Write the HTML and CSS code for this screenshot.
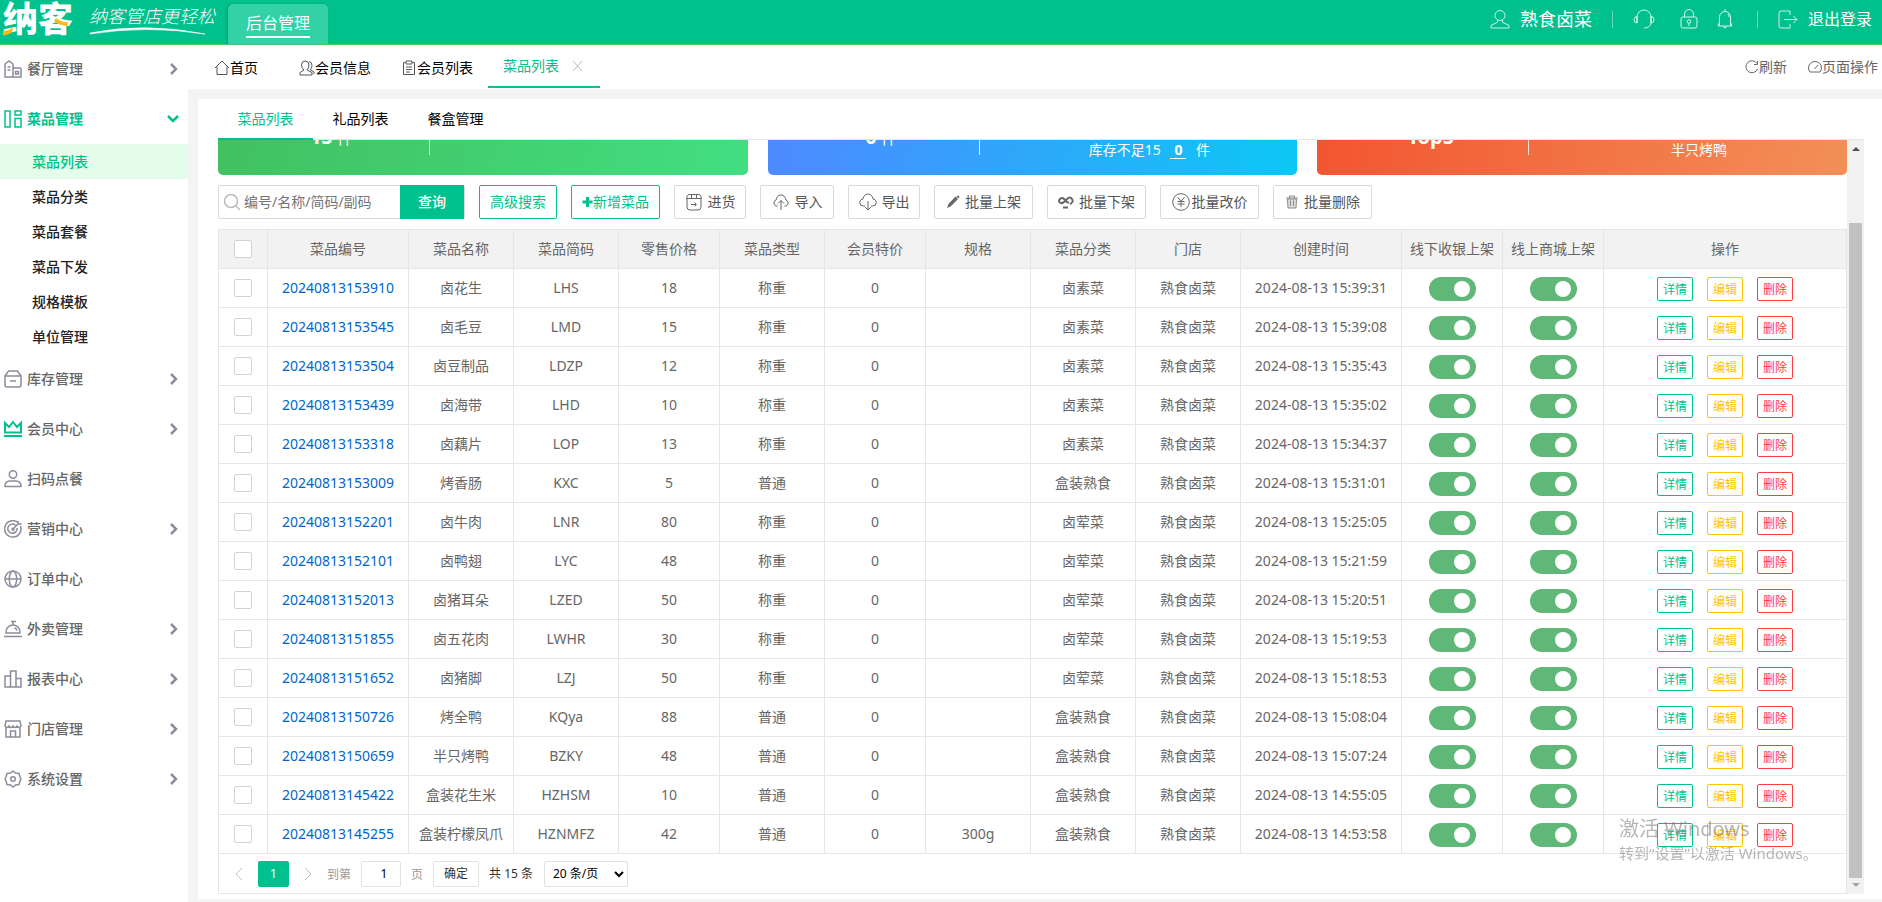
FILE: index.html
```
<!DOCTYPE html>
<html lang="zh-CN">
<head>
  <meta charset="UTF-8">
  <title>菜品列表</title>
  <link rel="stylesheet" href="styles.css">
</head>
<body>
  <header class="header">
    <div class="logo">纳客
      <svg class="logo-accent" viewBox="0 0 70 34"><path d="M1 28q6 0 10-4l-1 5q-4 4-9 3zM54 15q6 5 12 4l-1 4q-9-1-13-5z" fill="#ffb80c"/></svg>
    </div>
    <div class="slogan">
      <span>纳客管店更轻松</span>
      <svg width="118" height="8" viewBox="0 0 118 8"><path d="M1 6Q56-5 116 7Q58-2 1 7z" fill="#fff" stroke="#fff" stroke-width=".6"/></svg>
    </div>
    <a class="header-tab" href="#"><span>后台管理</span></a>
    <div class="header-right">
      <a class="user" href="#">
        <svg width="20" height="20" viewBox="0 0 20 20"><circle cx="10" cy="6.500" r="5"/><path d="M7.500 11v2.200L1 16.500V19h18v-2.500L12.500 13.200V11"/></svg>
        熟食卤菜
      </a>
      <i class="line"></i>
      <button class="icon-btn headset" aria-label="客服"><svg width="22" height="20" viewBox="0 0 22 20"><path d="M4 14V8a7 7 0 0 1 14 0v6M4 7.500Q1 7.500 1 10.700t3 3.300zM18 7.500q3 0 3 3.200t-3 3.300zM18 14q-1 5-7 5"/></svg></button>
      <button class="icon-btn lock" aria-label="锁屏"><svg width="18" height="20" viewBox="0 0 18 20"><path d="M4.500 8V5a4.500 4.500 0 0 1 9 0v3"/><rect x="1" y="8" width="16" height="11" rx="2"/><circle cx="9" cy="12.500" r="1.800"/><path d="M9 14.500V17"/></svg></button>
      <button class="icon-btn bell" aria-label="消息"><svg width="16" height="20" viewBox="0 0 16 20"><path d="M8 0v2M2.500 16V8a5.500 5.500 0 0 1 11 0v8M2.500 13L1 17h14l-1.500-4M6 17.500q2 3 4 0M11 5q1 1 1 3"/></svg></button>
      <i class="line"></i>
      <a class="logout" href="#">
        <svg width="20" height="19" viewBox="0 0 20 19"><path d="M12 5V1H3Q1 1 1 3v13q0 2 2 2h9v-4M6 9.500h13M15.500 6l3.500 3.500-3.500 3.500"/></svg>
        退出登录
      </a>
    </div>
  </header>

  <div class="layout">
    <nav class="sidebar">
      <a class="menu" href="#"><svg class="mi" viewBox="0 0 18 18"><path d="M1 17V4l4-3 4 3v13zM9 8h7q1 0 1 1v8H9M3.500 7h3M3.500 10h3M11.500 11.500h3v2.500h-3zM1 17h16"/></svg>餐厅管理<svg class="arrow" viewBox="0 0 10 12"><path d="M2 1l5 5-5 5"/></svg></a>
      <a class="menu active" href="#"><svg class="mi" viewBox="0 0 18 18"><path d="M1 1h5v16H1zM11 1h6v4h-6zM11 8.500h6V17h-6z"/></svg>菜品管理<svg class="arrow down" viewBox="0 0 12 10"><path d="M1 2l5 5 5-5"/></svg></a>
      <div class="submenu">
        <a class="on" href="#">菜品列表</a>
        <a href="#">菜品分类</a>
        <a href="#">菜品套餐</a>
        <a href="#">菜品下发</a>
        <a href="#">规格模板</a>
        <a href="#">单位管理</a>
      </div>
      <a class="menu" href="#"><svg class="mi" viewBox="0 0 18 18"><path d="M1 6l3.500-5h9L17 6M1 6h16v9q0 2-2 2H3q-2 0-2-2zM6 11h6"/></svg>库存管理<svg class="arrow" viewBox="0 0 10 12"><path d="M2 1l5 5-5 5"/></svg></a>
      <a class="menu vip" href="#"><svg class="mi" viewBox="0 0 18 18"><path d="M1 3l4 4 4-5 4 5 4-4v9.500H1zM0 16h18"/></svg>会员中心<svg class="arrow" viewBox="0 0 10 12"><path d="M2 1l5 5-5 5"/></svg></a>
      <a class="menu" href="#"><svg class="mi" viewBox="0 0 18 18"><circle cx="9" cy="4.500" r="3.700"/><path d="M1 16.500q0-5.500 5-5.500h6q5 0 5 5.500z"/></svg>扫码点餐</a>
      <a class="menu" href="#"><svg class="mi" viewBox="0 0 18 18"><path d="M14 2.500A8.200 8.200 0 1 0 16.500 6M11.500 5.200A4.600 4.600 0 1 0 13 8M9 9l6-6M14 1v3h3.500"/><circle cx="9" cy="9.200" r="1"/></svg>营销中心<svg class="arrow" viewBox="0 0 10 12"><path d="M2 1l5 5-5 5"/></svg></a>
      <a class="menu" href="#"><svg class="mi" viewBox="0 0 18 18"><circle cx="9" cy="9" r="8"/><ellipse cx="9" cy="9" rx="3.700" ry="8"/><path d="M1 9h16"/></svg>订单中心</a>
      <a class="menu" href="#"><svg class="mi" viewBox="0 0 18 18"><path d="M7 1.500h5M9 2v3M2 13v-1a7 7 0 0 1 14 0v1zM0 16.500h18M10.500 8q2 .5 2.500 2.500"/></svg>外卖管理<svg class="arrow" viewBox="0 0 10 12"><path d="M2 1l5 5-5 5"/></svg></a>
      <a class="menu" href="#"><svg class="mi" viewBox="0 0 18 18"><path d="M1 17V6h5.500v11zM6.500 17V1H12v16zM12 8.500h5V17H1"/></svg>报表中心<svg class="arrow" viewBox="0 0 10 12"><path d="M2 1l5 5-5 5"/></svg></a>
      <a class="menu" href="#"><svg class="mi" viewBox="0 0 18 18"><path d="M2 8v9h14V8M2 1h14l1 5q-2 3-4 0-2 3-4 0-2 3-4 0-2 3-4 0zM6.500 17v-6h5v6"/></svg>门店管理<svg class="arrow" viewBox="0 0 10 12"><path d="M2 1l5 5-5 5"/></svg></a>
      <a class="menu" href="#"><svg class="mi" viewBox="0 0 18 18"><path d="M9 1l2.500 2 3.500.5L16 7l1 2-1 2-1 3.500-3.500.5L9 17l-2.500-2-3.500-.5L2 11 1 9l1-2 1-3.500L6.500 3z"/><circle cx="9" cy="9" r="2.300"/></svg>系统设置<svg class="arrow" viewBox="0 0 10 12"><path d="M2 1l5 5-5 5"/></svg></a>
    </nav>

    <main class="main">
      <div class="page-tabs">
        <a class="page-tab home" href="#"><svg width="16" height="16" viewBox="0 0 16 16"><path d="M1 8l7-7 7 7M3 6.500V14.500h10V6.500"/></svg>首页</a>
        <a class="page-tab" href="#"><svg width="16" height="16" viewBox="0 0 16 16"><path d="M6 1q4 0 4 4 0 3-2 5l5 2.500v2.500H1v-2.500L5 10Q2.500 8 2.500 5 2.500 1 6 1M10 1.500q3 .5 3 4t-2 4l4 2.500v2"/></svg>会员信息</a>
        <a class="page-tab" href="#"><svg width="16" height="16" viewBox="0 0 16 16"><path d="M4.500 2.500h-2v12h11v-12h-2M5 1h6v3H5zM5 7h6M5 9.500h6M5 12h4"/></svg>会员列表</a>
        <a class="page-tab current" href="#">菜品列表<svg class="close" width="12" height="12" viewBox="0 0 12 12"><path d="M2 1l9 10M11 1L2 11"/></svg></a>
        <div class="page-tools">
          <a href="#"><svg width="14" height="14" viewBox="0 0 14 14"><path d="M12.500 9A6 6 0 1 1 12 3.500M12.500 1v3.500H9"/></svg>刷新</a>
          <a href="#"><svg width="14" height="14" viewBox="0 0 14 14"><path d="M2 12Q.5 10 .5 8a6.500 6.500 0 0 1 13 0q0 2-1.500 4zM6.500 9L10 5"/></svg>页面操作</a>
        </div>
      </div>

      <section class="panel">
        <div class="sub-tabs">
          <a class="active" href="#">菜品列表</a>
          <a href="#">礼品列表</a>
          <a href="#">餐盒管理</a>
        </div>

        <div class="scroller">
          <div class="content">
            <div class="cards">
              <div class="card green">
                <div class="card-left"><b>15</b> 件</div>
                <div class="card-right"></div>
              </div>
              <div class="card blue">
                <div class="card-left"><b>0</b> 件</div>
                <div class="card-right">库存不足15 <b class="num">0</b> 件</div>
              </div>
              <div class="card orange">
                <div class="card-left"><b>Top5</b></div>
                <div class="card-right">半只烤鸭</div>
              </div>
            </div>

            <div class="toolbar">
              <div class="search">
                <svg width="18" height="18" viewBox="0 0 18 18"><circle cx="8" cy="8" r="6.500"/><path d="M13 13l4 4"/></svg>
                <input type="text" placeholder="编号/名称/简码/副码" aria-label="编号/名称/简码/副码">
                <button>查询</button>
              </div>
              <button class="btn primary">高级搜索</button>
              <button class="btn primary add"><svg width="11" height="12" viewBox="0 0 11 12"><path d="M5.500 1v10M.5 6h10"/></svg>新增菜品</button>
              <button class="btn small"><svg width="18" height="18" viewBox="0 0 18 18"><path d="M4 1.500h10q2 0 2.500 4h-15q.5-4 2.500-4zM2 5.500V14q0 3 3 3h8q3 0 3-3V5.500M6.500 1.500v4M11.500 1.500v4M6 11.500h5M9.500 9.500l2 2-2 2"/></svg>进货</button>
              <button class="btn small import"><svg width="18" height="18" viewBox="0 0 18 18"><path d="M5.500 13H4A3.200 3.200 0 0 1 4 7Q5 2 9 2t5 5a3.200 3.200 0 0 1 0 6H12.500M9 17V7.500M6 10.500l3-3 3 3"/></svg>导入</button>
              <button class="btn small"><svg width="18" height="18" viewBox="0 0 18 18"><path d="M6 13H4.500A3.500 3.500 0 0 1 4 6Q5 1 9 1t5 5a3.500 3.500 0 0 1-.5 7H12M9 8v9M6 14l3 3 3-3"/></svg>导出</button>
              <button class="btn"><svg width="14" height="14" viewBox="0 0 14 14"><path class="solid" d="M1 13l1.500-4 7-7.500 2.500 2.500-7.500 7.500zM10.500 1.500q1.500-1.500 2.500-.5t-.5 2.500z"/></svg>批量上架</button>
              <button class="btn"><svg class="bold" width="16" height="14" viewBox="0 0 16 14"><path d="M12 9Q16 7 14 4T9 4L6 7Q4 9 2 7.500T2 4 6 4L8 6Q9 8 11 7.500M5 12.500h5"/></svg>批量下架</button>
              <button class="btn tight"><svg width="18" height="18" viewBox="0 0 18 18"><circle cx="9" cy="9" r="8.300"/><path d="M5.500 4L9 8.500 12.500 4M9 8.500V14M5.500 8.500h7M5.500 11h7"/></svg>批量改价</button>
              <button class="btn trash"><svg width="14" height="14" viewBox="0 0 14 14"><path fill="#ddd" d="M2.500 4l.5 9h8l.5-9z"/><path d="M1 3h12M4.500 3V1h5v2M5.500 5.500v5.500M8.500 5.500v5.500"/></svg>批量删除</button>
            </div>

            <table class="dish-table">
              <colgroup>
                <col class="w-check"><col class="w-id"><col class="w-105"><col class="w-105"><col class="w-101"><col class="w-105"><col class="w-101">
                <col class="w-105"><col class="w-105"><col class="w-105"><col class="w-time"><col class="w-101"><col class="w-101"><col>
              </colgroup>
              <thead>
                <tr>
                  <th><input type="checkbox" aria-label="全选"></th>
                  <th>菜品编号</th><th>菜品名称</th><th>菜品简码</th><th>零售价格</th><th>菜品类型</th><th>会员特价</th>
                  <th>规格</th><th>菜品分类</th><th>门店</th><th>创建时间</th><th>线下收银上架</th><th>线上商城上架</th><th>操作</th>
                </tr>
              </thead>
              <tbody id="rows"></tbody>
            </table>

            <div class="pager">
              <button class="page-arrow" aria-label="上一页"><svg width="8" height="14" viewBox="0 0 8 14"><path d="M7 1L1 7l6 6"/></svg></button>
              <button class="page-num">1</button>
              <button class="page-arrow" aria-label="下一页"><svg width="8" height="14" viewBox="0 0 8 14"><path d="M1 1l6 6-6 6"/></svg></button>
              <label class="jump">到第<input type="text" value="1">页</label>
              <button class="page-ok">确定</button>
              <span class="total">共 15 条</span>
              <select aria-label="每页条数"><option>20 条/页</option></select>
            </div>
          </div>
          <div class="scrollbar">
            <i class="up"></i>
            <i class="thumb"></i>
            <i class="dn"></i>
          </div>
        </div>
      </section>
    </main>
  </div>

  <div class="watermark">
    <p class="big">激活 Windows</p>
    <p>转到“设置”以激活 Windows。</p>
  </div>

  <script>
    // 编号, 名称, 简码, 价格, 类型, 规格, 分类, 时间
    const dishes = [
      ["20240813153910", "卤花生", "LHS", 18, "称重", "", "卤素菜", "15:39:31"],
      ["20240813153545", "卤毛豆", "LMD", 15, "称重", "", "卤素菜", "15:39:08"],
      ["20240813153504", "卤豆制品", "LDZP", 12, "称重", "", "卤素菜", "15:35:43"],
      ["20240813153439", "卤海带", "LHD", 10, "称重", "", "卤素菜", "15:35:02"],
      ["20240813153318", "卤藕片", "LOP", 13, "称重", "", "卤素菜", "15:34:37"],
      ["20240813153009", "烤香肠", "KXC", 5, "普通", "", "盒装熟食", "15:31:01"],
      ["20240813152201", "卤牛肉", "LNR", 80, "称重", "", "卤荤菜", "15:25:05"],
      ["20240813152101", "卤鸭翅", "LYC", 48, "称重", "", "卤荤菜", "15:21:59"],
      ["20240813152013", "卤猪耳朵", "LZED", 50, "称重", "", "卤荤菜", "15:20:51"],
      ["20240813151855", "卤五花肉", "LWHR", 30, "称重", "", "卤荤菜", "15:19:53"],
      ["20240813151652", "卤猪脚", "LZJ", 50, "称重", "", "卤荤菜", "15:18:53"],
      ["20240813150726", "烤全鸭", "KQya", 88, "普通", "", "盒装熟食", "15:08:04"],
      ["20240813150659", "半只烤鸭", "BZKY", 48, "普通", "", "盒装熟食", "15:07:24"],
      ["20240813145422", "盒装花生米", "HZHSM", 10, "普通", "", "盒装熟食", "14:55:05"],
      ["20240813145255", "盒装柠檬凤爪", "HZNMFZ", 42, "普通", "300g", "盒装熟食", "14:53:58"]
    ];

    document.getElementById("rows").innerHTML = dishes.map(d => `
      <tr>
        <td><input type="checkbox" aria-label="选择${d[1]}"></td>
        <td><a href="#">${d[0]}</a></td>
        <td>${d[1]}</td>
        <td>${d[2]}</td>
        <td>${d[3]}</td>
        <td>${d[4]}</td>
        <td>0</td>
        <td>${d[5]}</td>
        <td>${d[6]}</td>
        <td>熟食卤菜</td>
        <td>2024-08-13 ${d[7]}</td>
        <td class="low"><input class="switch" type="checkbox" checked aria-label="线下收银上架"></td>
        <td class="low"><input class="switch" type="checkbox" checked aria-label="线上商城上架"></td>
        <td class="low"><div class="ops"><button class="detail">详情</button><button class="edit">编辑</button><button class="del">删除</button></div></td>
      </tr>`).join("");
  </script>
</body>
</html>
```
FILE: styles.css
```
* {
  box-sizing: border-box;
}
body {
  margin: 0;
  min-height: 100vh;
  display: flex;
  flex-direction: column;
  font-family: "Noto Sans", "Noto Sans CJK SC", sans-serif;
  font-size: 14px;
  line-height: 20px;
  color: #666;
  background-color: #fff;
}
a {
  color: inherit;
  text-decoration: none;
}
button, input, select {
  font-family: inherit;
  font-size: 14px;
  line-height: 20px;
  margin: 0;
}
button {
  padding: 0;
  background: none;
  border: none;
  cursor: pointer;
}
svg {
  flex: none;
  fill: none;
  stroke: currentColor;
}

/* header */
.header {
  display: flex;
  height: 45px;
  padding-right: 10px;
  color: #fff;
  background-color: #00c18d;
  border-bottom: 1px solid #3fd06a;
}
.logo {
  position: relative;
  width: 74px;
  margin-right: 15px;
  padding-left: 3px;
  font-size: 35px;
  font-weight: 900;
  line-height: 38px;
  white-space: nowrap;
}
.logo-accent {
  position: absolute;
  left: 2px;
  top: 3px;
  width: 70px;
  height: 34px;
  stroke: none;
}
.slogan {
  display: flex;
  flex-direction: column;
  width: 139px;
  padding-top: 5px;
  font-size: 18px;
  font-style: italic;
  font-weight: 300;
  line-height: 22px;
  white-space: nowrap;
}
.header-tab {
  width: 100px;
  margin-top: 4px;
  padding-top: 7px;
  font-size: 16px;
  text-align: center;
  background-color: #33d1a6;
  border-radius: 5px 5px 0 0;
  box-shadow: -1px 0 2px rgba(0, 80, 60, 0.3);
}
.header-tab span {
  display: inline-block;
  height: 27px;
  line-height: 24px;
  border-bottom: 2px solid #fff;
}
.header-right {
  display: flex;
  align-items: center;
  margin-left: auto;
  padding-bottom: 6px;
}
.user, .logout {
  display: flex;
  align-items: center;
  gap: 10px;
  font-size: 18px;
}
.logout {
  font-size: 16px;
}
.user svg, .logout svg {
  opacity: 0.8;
}
.line {
  width: 1px;
  height: 17px;
  margin: 0 20px;
  background-color: #5fdcb8;
}
.icon-btn {
  display: flex;
  color: #d8f7ee;
}
.lock {
  margin: 0 19px 0 25px;
}
.bell {
  margin-right: 4px;
}

/* sidebar */
.layout {
  flex: 1;
  display: flex;
}
.sidebar {
  flex: none;
  width: 188px;
  margin-top: -1px;
  font-weight: 500;
}
.menu {
  display: flex;
  align-items: center;
  height: 50px;
  padding: 0 9px 0 4px;
}
.mi {
  width: 18px;
  height: 18px;
  margin-right: 5px;
  color: #8c8c9c;
  stroke-width: 1.5;
}
.arrow {
  width: 10px;
  height: 12px;
  margin-left: auto;
  color: #8c8c9c;
  stroke-width: 2.5;
}
.arrow.down {
  width: 12px;
  height: 10px;
}
.menu.active, .active .mi, .active .arrow, .vip .mi {
  color: #00c18d;
}
.menu.active {
  font-weight: 700;
}
.vip .mi {
  stroke-width: 2;
}
.submenu a {
  display: block;
  height: 35px;
  padding-left: 32px;
  line-height: 35px;
  color: #222;
}
.submenu .on {
  color: #00c18d;
  background-color: #e3fdea;
}

/* page tabs */
.main {
  flex: 1;
  min-width: 0;
  background-color: #f4f4f4;
}
.page-tabs {
  display: flex;
  height: 44px;
  padding-left: 11px;
  background-color: #fff;
}
.page-tab {
  display: flex;
  align-items: center;
  padding: 2px 15px 0;
  color: #000;
}
.page-tab svg {
  color: #555;
}
.page-tab.home {
  padding-right: 26px;
}
.page-tab.current {
  height: 43px;
  padding: 0 17px 0 15px;
  color: #00c18d;
  border-bottom: 2px solid #00c18d;
}
.page-tab .close {
  margin-left: 12px;
  color: #bbb;
}
.page-tools {
  display: flex;
  gap: 21px;
  margin-left: auto;
  padding-right: 4px;
}
.page-tools a {
  display: flex;
  align-items: center;
}

/* panel */
.panel {
  margin: 10px 0 4px 10px;
  padding: 0 18px 5px 20px;
  background-color: #fff;
}
.sub-tabs {
  display: flex;
  height: 41px;
  border-bottom: 1px solid #e6e6e6;
}
.sub-tabs a {
  width: 95px;
  height: 41px;
  line-height: 40px;
  text-align: center;
  color: #000;
}
.sub-tabs .active {
  color: #00c18d;
  border-bottom: 2px solid #00c18d;
}
.scroller {
  display: flex;
  overflow: hidden;
}
.content {
  flex: 1;
  min-width: 0;
}

/* cards, scrolled partly out of view */
.cards {
  display: flex;
  gap: 20px;
  margin-top: -65px;
}
.card {
  flex: 1;
  display: flex;
  align-items: flex-end;
  height: 100px;
  padding-bottom: 14px;
  color: #fff;
  border-radius: 5px;
}
.card.green {
  background: linear-gradient(100deg, #42c060, #42de82);
}
.card.blue {
  background: linear-gradient(100deg, #4f88ff, #0bc8f5);
}
.card.orange {
  background: linear-gradient(100deg, #f25430, #f29058);
}
.card-left {
  width: 40%;
  height: 60px;
  margin-bottom: 6px;
  padding: 32px 0 0 16px;
  font-size: 16px;
  text-align: center;
  border-right: 1px solid rgba(255, 255, 255, 0.8);
}
.card-left b {
  font-size: 20px;
}
.card-right {
  flex: 1;
  padding-left: 22px;
  line-height: 22px;
  text-align: center;
}
.num {
  display: inline-block;
  margin: 0 6px;
  padding: 0 4px;
  line-height: 16px;
  border-bottom: 1px solid #fff;
}

/* toolbar */
.toolbar {
  display: flex;
  gap: 14px;
  padding: 10px 0;
}
.search {
  display: flex;
  align-items: center;
  width: 247px;
  height: 34px;
  padding-left: 4px;
  border: 1px solid #d9d9d9;
  border-radius: 2px;
}
.search svg {
  color: #bbb;
  stroke-width: 1.5;
}
.search input {
  flex: 1;
  min-width: 0;
  padding: 0 0 0 3px;
  border: none;
  outline: none;
}
.search input::placeholder {
  color: #757575;
}
.search button {
  width: 64px;
  height: 34px;
  color: #fff;
  font-weight: 500;
  background-color: #00c18d;
}
.btn {
  display: flex;
  align-items: center;
  justify-content: center;
  gap: 5px;
  width: 99px;
  height: 34px;
  color: #555;
  border: 1px solid #d9d9d9;
  border-radius: 2px;
}
.btn svg {
  color: #666;
}
.btn.small {
  width: 72px;
}
.btn.import {
  width: 74px;
}
.btn.tight {
  gap: 2px;
}
.btn.primary {
  width: 78px;
  color: #00c18d;
  border-color: #00c18d;
}
.btn.add {
  gap: 0;
  width: 89px;
}
.btn.add svg {
  color: #00c18d;
  stroke-width: 3;
}
.btn.trash svg {
  color: #888;
}
.btn .solid {
  fill: currentColor;
  stroke: none;
}
.btn .bold {
  stroke-width: 2;
}

/* table */
.dish-table {
  width: 100%;
  table-layout: fixed;
  border-collapse: collapse;
}
.w-check { width: 49px; }
.w-id { width: 141px; }
.w-105 { width: 105px; }
.w-101 { width: 101px; }
.w-time { width: 161px; }
.dish-table th, .dish-table td {
  height: 39px;
  padding: 0;
  font-weight: 400;
  text-align: center;
  white-space: nowrap;
  border: 1px solid #e6e6e6;
}
.dish-table th {
  background-color: #f2f2f2;
}
.dish-table .low {
  padding-top: 2px;
}
.dish-table td a {
  color: #06c;
}
.dish-table input {
  appearance: none;
  display: block;
  width: 18px;
  height: 18px;
  margin: 0 auto;
  background-color: #fff;
  border: 1px solid #d2d2d2;
  border-radius: 2px;
}
.dish-table .switch {
  display: flex;
  align-items: center;
  justify-content: flex-end;
  width: 47px;
  height: 24px;
  padding-right: 6px;
  background-color: #5fb878;
  border: none;
  border-radius: 12px;
}
.switch::before {
  content: "";
  width: 16px;
  height: 16px;
  background-color: #fff;
  border-radius: 50%;
}
.ops {
  display: flex;
  justify-content: center;
  gap: 14px;
}
.ops button {
  width: 36px;
  height: 24px;
  padding-top: 2px;
  font-size: 12px;
  border: 1px solid;
  border-radius: 2px;
}
.detail { color: #00c18d; }
.edit { color: #ffc400; }
.del { color: #ff3b3b; }

/* pager */
.pager {
  display: flex;
  align-items: center;
  height: 40px;
  padding-left: 16px;
  font-size: 12px;
  color: #333;
  border: 1px solid #e6e6e6;
  border-top: none;
}
.pager button, .pager input, .pager select {
  height: 26px;
  font-size: 12px;
  border-radius: 2px;
}
.pager .page-arrow {
  display: flex;
  align-items: center;
  color: #c2c2c2;
}
.pager .page-num {
  width: 31px;
  margin: 0 15px;
  color: #fff;
  background-color: #00c18d;
}
.jump {
  margin-left: 15px;
  color: #999;
}
.jump input {
  width: 40px;
  margin: 0 10px;
  padding: 0 0 0 6px;
  text-align: center;
  border: 1px solid #e2e2e2;
}
.pager .page-ok {
  width: 46px;
  margin: 0 10px;
  color: #333;
  border: 1px solid #e2e2e2;
}
.pager select {
  width: 84px;
  margin-left: 11px;
  padding: 0 0 0 4px;
  color: #000;
  background-color: #fff;
  border: 1px solid #e2e2e2;
}

/* scrollbar */
.scrollbar {
  display: flex;
  flex-direction: column;
  align-items: center;
  width: 17px;
  padding: 7px 0;
  background-color: #f1f1f1;
}
.up, .dn {
  border: 4px solid transparent;
}
.up {
  border-top: none;
  border-bottom-color: #505050;
}
.dn {
  border-bottom: none;
  border-top-color: #a3a3a3;
}
.thumb {
  flex: 1;
  width: 13px;
  margin: 72px 0 5px;
  background-color: #c1c1c1;
}

/* watermark */
.watermark {
  position: fixed;
  right: 64px;
  bottom: 37px;
  width: 199px;
  font-size: 15px;
  line-height: 24px;
  color: rgba(120, 120, 120, 0.55);
  white-space: nowrap;
  pointer-events: none;
}
.watermark p {
  margin: 0;
}
.watermark .big {
  font-size: 20px;
}
```
